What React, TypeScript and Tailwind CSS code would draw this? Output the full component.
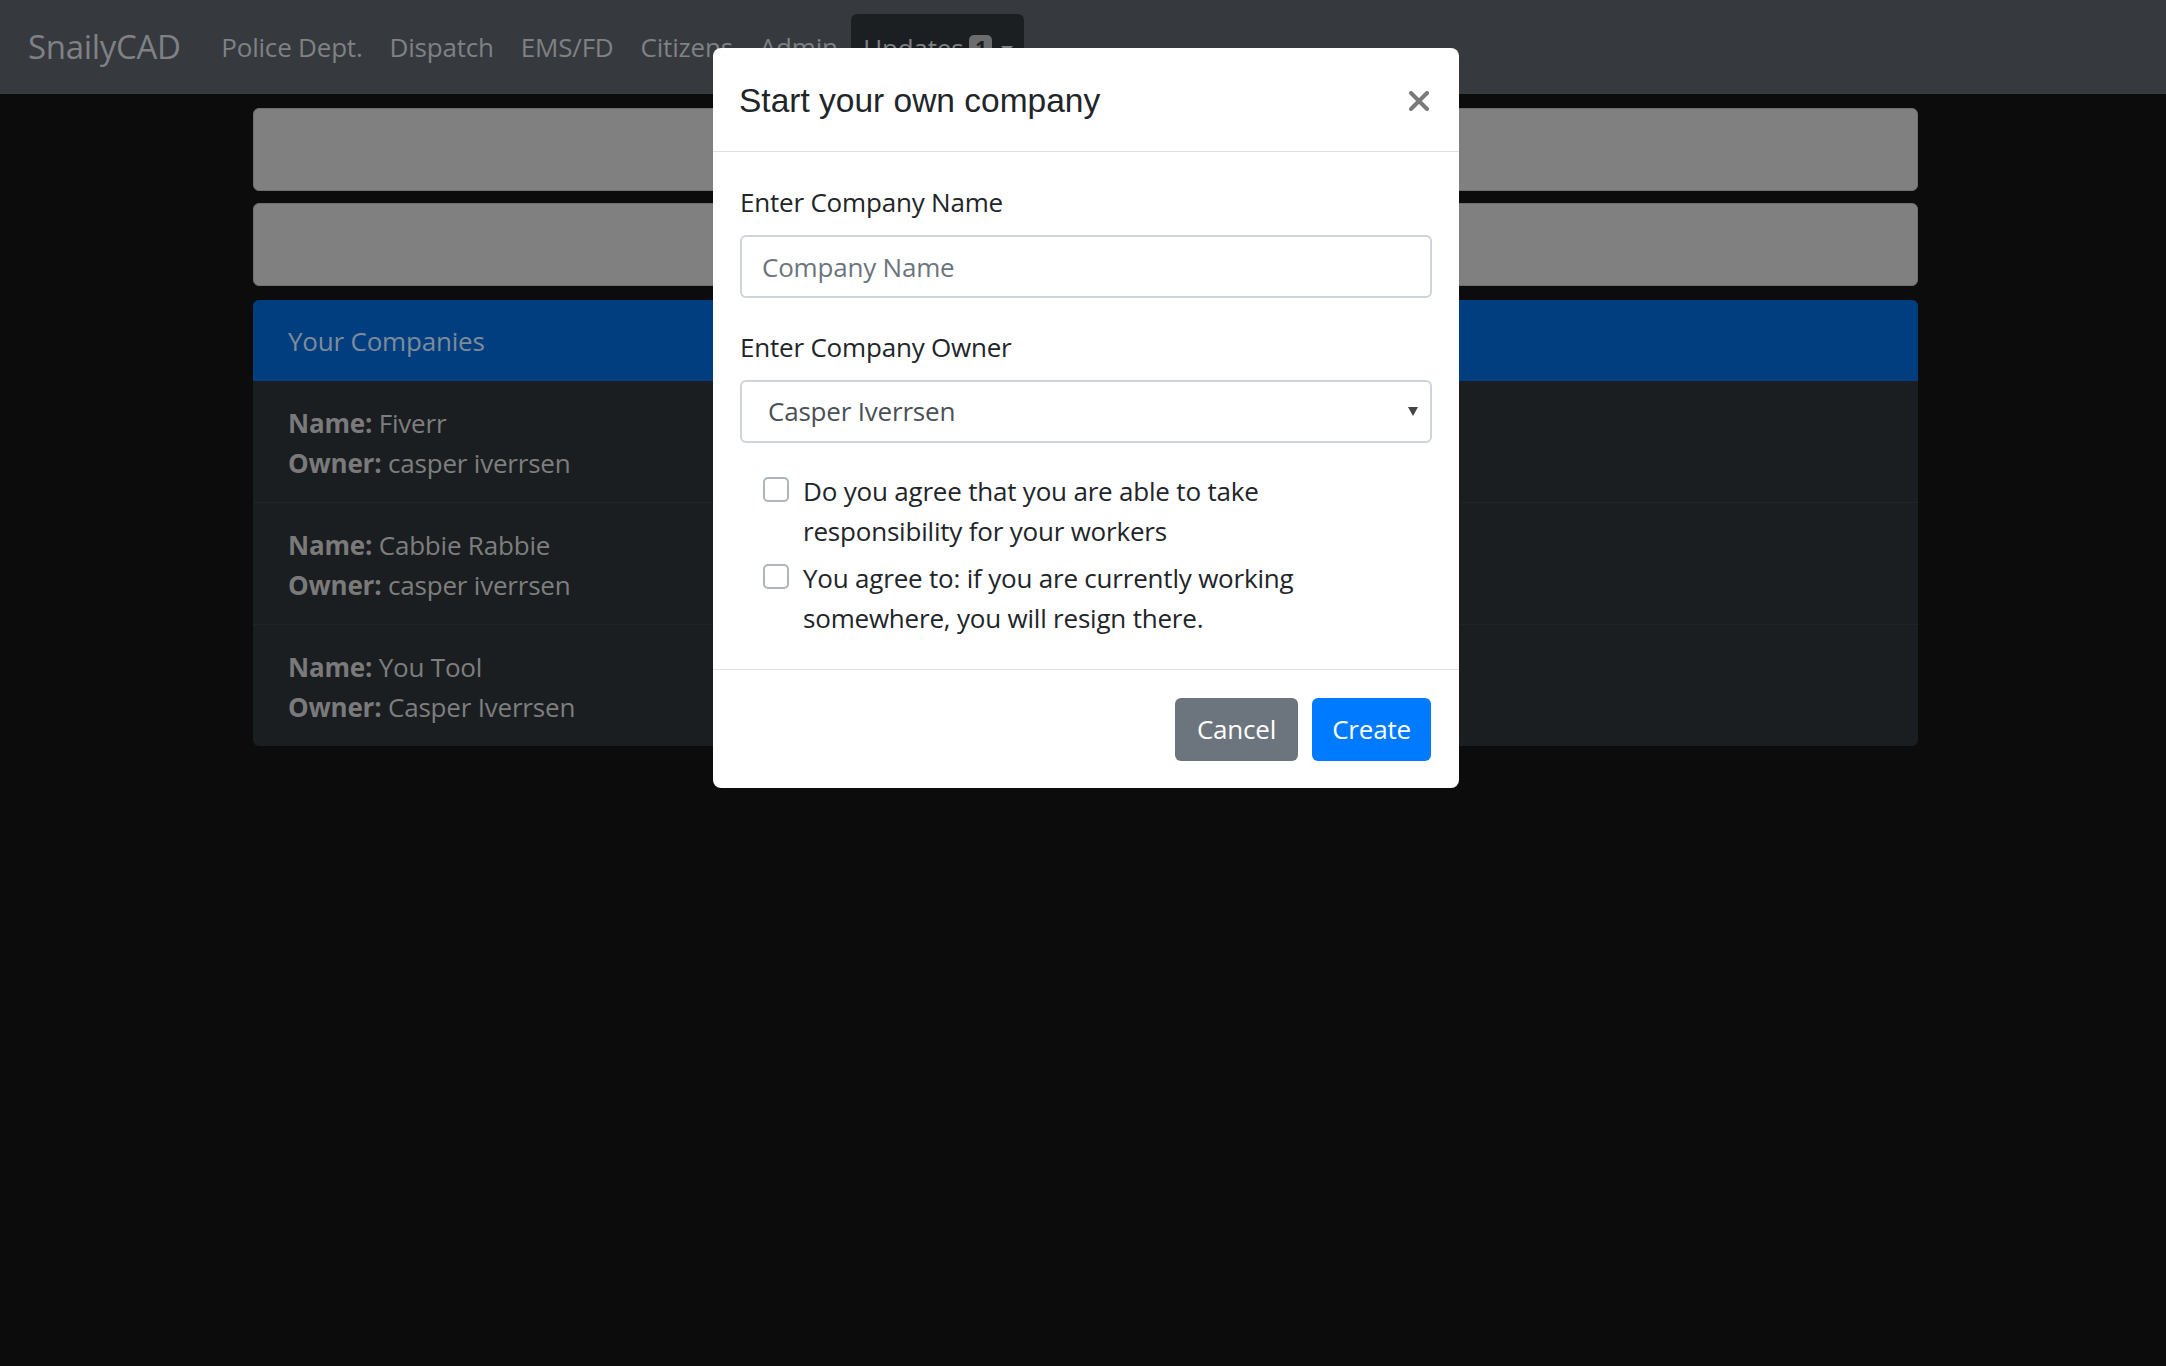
import React from "react";

const font = { fontFamily: '"Segoe UI", "Open Sans", "Liberation Sans", sans-serif' };

const companies = [
  { id: 1, name: "Fiverr", owner: "casper iverrsen" },
  { id: 2, name: "Cabbie Rabbie", owner: "casper iverrsen" },
  { id: 3, name: "You Tool", owner: "Casper Iverrsen" },
];

const navLinks = ["Police Dept.", "Dispatch", "EMS/FD", "Citizens", "Admin"];

const Navbar = () => (
  <nav className="h-[94px] bg-[#363a3e] flex items-center px-[28px] text-[#7f8184]">
    <span className="text-[33px] leading-[50px] tracking-[-0.3px] mr-[27px]">SnailyCAD</span>
    <ul className="flex items-center text-[26px] leading-[40px] tracking-[-0.2px]">
      {navLinks.map((l) => (
        <li key={l} className="px-[13.5px]">{l}</li>
      ))}
      <li className="self-start mt-[14px] h-[80px] rounded-t-[6px] bg-[#1c1f22] pl-[12px] pr-[11px] pt-[14px] flex items-start">
        <span>Updates</span>
        <span className="ml-[6px] mt-[7px] h-[26px] w-[23px] rounded-[5px] bg-[#6a6c6e] text-[#1c1f22] text-[20px] leading-[26px] font-bold text-center">1</span>
        <span className="mt-[18px] ml-[9px] w-0 h-0 border-l-[6px] border-r-[6px] border-t-[7px] border-l-transparent border-r-transparent border-t-[#7f8184]" />
      </li>
    </ul>
  </nav>
);

const Page = () => (
  <main className="w-[1665px] ml-[253px] pt-[14px]">
    <div className="h-[83px] rounded-[6px] bg-[#808080] border border-[#6f6f6f] mb-[12px]" />
    <div className="h-[83px] rounded-[6px] bg-[#808080] border border-[#6f6f6f] mb-[14px]" />
    <section className="rounded-[6px] overflow-hidden bg-[#1b1e21]">
      <header className="h-[81px] bg-[#003e80] px-[35px] flex items-center text-[26px] tracking-[-0.2px] leading-[40px] text-[#7e8b99]">
        Your Companies
      </header>
      {companies.map((c, i) => (
        <div
          key={c.id}
          className={`px-[35px] pt-[22px] pb-[19px] text-[26px] tracking-[-0.2px] leading-[40px] text-[#7e7e7e] ${i > 0 ? "border-t border-[#202327]" : ""}`}
        >
          <div><b className="font-bold text-[#7a7a7a]">Name:</b> {c.name}</div>
          <div><b className="font-bold text-[#7a7a7a]">Owner:</b> {c.owner}</div>
        </div>
      ))}
    </section>
  </main>
);

const Check = ({ children }: { children: React.ReactNode }) => (
  <label className="flex items-start pl-[23px]">
    <span className="mt-[6px] w-[26px] h-[25px] shrink-0 rounded-[5px] border-2 border-[#adb5bd] bg-white" />
    <span className="ml-[14px] text-[26px] tracking-[-0.2px] leading-[40px] text-[#212529]">{children}</span>
  </label>
);

const Modal = () => (
  <div className="fixed left-[713px] top-[48px] w-[746px] rounded-[8px] bg-white">
    <div className="h-[104px] flex items-center justify-between pl-[26px] pr-[30px] border-b border-[#dee2e6]">
      <h5 className="text-[33.5px] leading-[50px] mt-[2px] text-[#212529]" style={{ fontFamily: '"Liberation Sans", Arial, sans-serif' }}>
        Start your own company
      </h5>
      <svg width="20" height="20" viewBox="0 0 20 20" className="mt-[2px]">
        <path d="M2 2 L18 18 M18 2 L2 18" stroke="#7a7a7a" strokeWidth="4" strokeLinecap="round" />
      </svg>
    </div>
    <div className="pt-[30px] pb-[31px] px-[27px] text-[26px] tracking-[-0.2px]">
      <div className="leading-[40px] text-[#212529] mb-[13px]">Enter Company Name</div>
      <input
        placeholder="Company Name"
        className="w-full h-[63px] rounded-[6px] border-2 border-[#ced4da] px-[20px] text-[#495057] placeholder:text-[#6c757d] outline-none"
      />
      <div className="leading-[40px] text-[#212529] mt-[29px] mb-[13px]">Enter Company Owner</div>
      <div className="h-[63px] rounded-[6px] border-2 border-[#ced4da] pl-[26px] pr-[12px] flex items-center justify-between text-[#495057]">
        <span>Casper Iverrsen</span>
        <span className="w-0 h-0 border-l-[5px] border-r-[5px] border-t-[9px] border-l-transparent border-r-transparent border-t-[#444]" />
      </div>
      <div className="mt-[28px] flex flex-col gap-[7px]">
        <Check>
          Do you agree that you are able to take
          <br />
          responsibility for your workers
        </Check>
        <Check>
          You agree to: if you are currently working
          <br />
          somewhere, you will resign there.
        </Check>
      </div>
    </div>
    <div className="border-t border-[#dee2e6] pt-[28px] pb-[27px] px-[28px] flex justify-end gap-[14px]">
      <button className="h-[63px] w-[123px] rounded-[6px] bg-[#6c757d] text-white text-[26px] tracking-[-0.2px]">Cancel</button>
      <button className="h-[63px] w-[119px] rounded-[6px] bg-[#007bff] text-white text-[26px] tracking-[-0.2px]">Create</button>
    </div>
  </div>
);

export default function App() {
  return (
    <div className="min-h-[1366px] bg-[#0c0c0c]" style={font}>
      <Navbar />
      <Page />
      <Modal />
    </div>
  );
}
